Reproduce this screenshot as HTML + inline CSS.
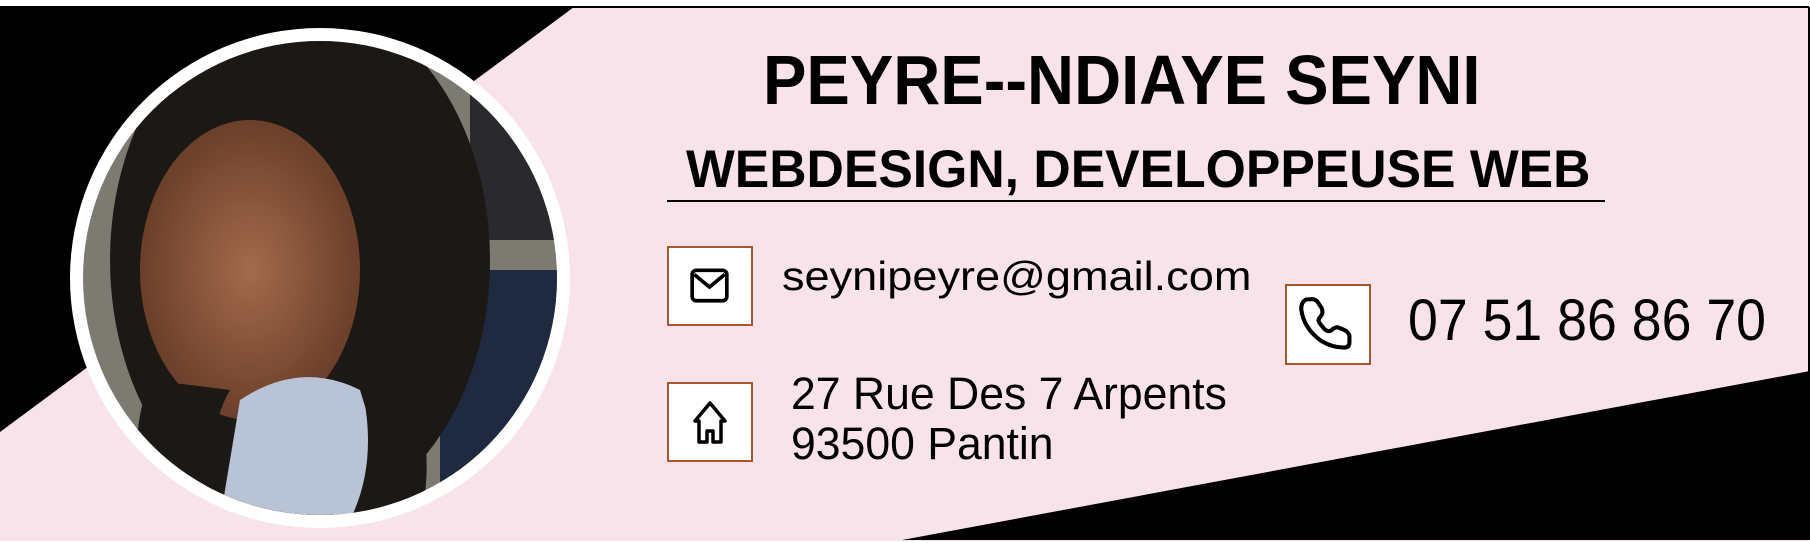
<!DOCTYPE html>
<html><head><meta charset="utf-8"><style>
html,body{margin:0;padding:0;background:#fff;}
body{width:1810px;height:543px;position:relative;overflow:hidden;font-family:"Liberation Sans",sans-serif;}
.abs{position:absolute;}
.t{position:absolute;white-space:nowrap;color:#000;transform-origin:0 0;}
.box{position:absolute;background:#fff;border:2px solid #a5582b;box-sizing:border-box;}
</style></head><body>
<svg class="abs" style="left:0;top:0" width="1810" height="543">
<rect x="0" y="7" width="1809" height="534" fill="#f9e3eb"/>
<line x1="0" y1="7" x2="1809" y2="7" stroke="#000" stroke-width="2"/>
<line x1="1809" y1="7" x2="1809" y2="380" stroke="#000" stroke-width="2"/>
<polygon points="0,7 574,7 0,432" fill="#000"/>
<polygon points="1810,371 1810,540 902,540" fill="#000"/>
<defs><clipPath id="c"><circle cx="320" cy="278" r="237"/></clipPath>
<radialGradient id="face" cx="0.5" cy="0.5" r="0.5"><stop offset="0" stop-color="#a46a4c"/><stop offset="1" stop-color="#6b3f2a"/></radialGradient></defs>
<circle cx="320" cy="278" r="250" fill="#fff"/>
<g clip-path="url(#c)">
<rect x="80" y="40" width="480" height="480" fill="#7d7a72"/>
<rect x="470" y="40" width="100" height="200" fill="#2a2a2e"/>
<rect x="440" y="270" width="130" height="250" fill="#1f2a40"/>
<ellipse cx="300" cy="260" rx="190" ry="260" fill="#1c1816"/>
<ellipse cx="250" cy="270" rx="110" ry="150" fill="url(#face)"/>
<path d="M240 400 Q300 360 360 390 L400 520 L220 520 Z" fill="#b9c3d6"/>
<path d="M150 380 Q120 460 160 520 L230 520 Q200 440 230 390 Z" fill="#1c1816"/>
<path d="M360 380 Q380 460 350 520 L420 520 Q440 440 400 360 Z" fill="#1c1816"/>
</g>
</svg>
<div class="t" style="left:763px;top:40px;font-size:70px;font-weight:bold;line-height:80px;transform:scaleX(0.93)">PEYRE--NDIAYE SEYNI</div>
<div class="t" style="left:686px;top:140px;font-size:53px;font-weight:bold;line-height:60px;transform:scaleX(0.975)">WEBDESIGN, DEVELOPPEUSE WEB</div>
<div class="abs" style="left:667px;top:200px;width:938px;height:2px;background:#000"></div>

<div class="box" style="left:667px;top:246px;width:86px;height:80px"></div>
<svg class="abs" style="left:688px;top:264px" width="44" height="42" viewBox="0 0 40 40"><rect x="3" y="6" width="33" height="29" rx="4" fill="none" stroke="#000" stroke-width="3.5"/><path d="M5 10 L19.5 22 L34 10" fill="none" stroke="#000" stroke-width="3.5" stroke-linejoin="round"/></svg>
<div class="t" style="left:782px;top:252px;font-size:41px;line-height:48px;transform:scaleX(1.1)">seynipeyre@gmail.com</div>

<div class="box" style="left:667px;top:382px;width:86px;height:80px"></div>
<svg class="abs" style="left:690px;top:399px" width="40" height="50" viewBox="0 0 40 50"><path d="M20 4 L35 22 L31 22 L31 43 L23 43 L23 32 L17 32 L17 43 L9 43 L9 22 L5 22 Z" fill="none" stroke="#000" stroke-width="3.5" stroke-linejoin="round"/></svg>
<div class="t" style="left:791px;top:371px;font-size:45px;line-height:45px;transform:scaleX(0.99)">27 Rue Des 7 Arpents</div>
<div class="t" style="left:791px;top:421px;font-size:45px;line-height:45px;transform:scaleX(0.99)">93500 Pantin</div>

<div class="box" style="left:1285px;top:284px;width:86px;height:81px"></div>
<svg class="abs" style="left:1298px;top:296px" width="60" height="56" viewBox="0 0 56 52"><path d="M8 3 Q3 5 3 12 Q5 30 22 42 Q32 48 43 48 Q48 48 48 43 L48 37 Q47 33 42 31 L37 29 Q34 29 31 32 Q28 34 24 30 L20 25 Q18 22 21 19 Q24 16 22 11 L18 5 Q15 2 11 3 Z" fill="none" stroke="#000" stroke-width="3.8" stroke-linejoin="round"/></svg>
<div class="t" style="left:1408px;top:288px;font-size:58px;line-height:66px;transform:scaleX(0.925)">07 51 86 86 70</div>
</body></html>
